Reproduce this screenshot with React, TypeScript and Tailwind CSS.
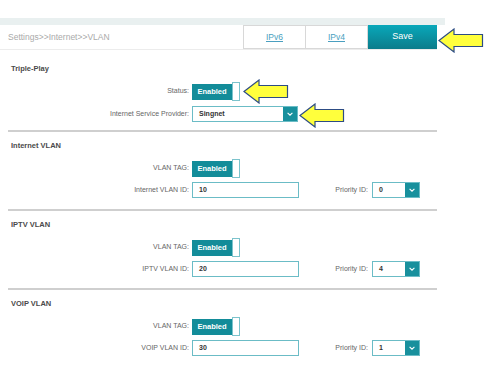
import React from "react";

const font = { fontFamily: '"Liberation Sans", Arial, sans-serif' };

function Arrow({ className }: { className: string }) {
  return (
    <svg className={className} viewBox="0 0 46 25" width="46" height="25">
      <polygon
        points="1,12.5 16,1 16,6.5 44.5,6.5 44.5,18.5 16,18.5 16,24"
        fill="#ffff3c"
        stroke="#2d4c84"
        strokeWidth="1.2"
        strokeLinejoin="miter"
      />
    </svg>
  );
}

function Toggle() {
  return (
    <div className="flex items-center">
      <div className="w-[40px] h-[16px] bg-[#138c99] text-white text-[7.5px] font-bold flex items-center justify-center">
        Enabled
      </div>
      <div className="w-[8px] h-[19px] bg-white border border-[#7cc3cc]" />
    </div>
  );
}

function Chevron() {
  return (
    <svg viewBox="0 0 10 10" width="8" height="8">
      <path d="M2 3.5 L5 6.5 L8 3.5" fill="none" stroke="white" strokeWidth="1.4" />
    </svg>
  );
}

function Select({ value, width }: { value: string; width: string }) {
  return (
    <div className={`${width} h-[16px] flex border border-[#6bbcc6] bg-white`}>
      <div className="flex-1 flex items-center pl-[6px] text-[7px] font-bold text-[#333]">{value}</div>
      <div className="w-[14px] bg-[#18909d] flex items-center justify-center">
        <Chevron />
      </div>
    </div>
  );
}

function Row({ label, children }: { label: string; children: React.ReactNode }) {
  return (
    <div className="flex items-center gap-[3px]">
      <div className="w-[178px] text-right text-[7px] text-[#666]">{label}</div>
      {children}
    </div>
  );
}

function VlanSection({ title, idLabel, id, priority }: { title: string; idLabel: string; id: string; priority: string }) {
  return (
    <section className="border-t-2 border-[#cfcfcf] pl-[3px] pt-[9px] pb-[11px]">
      <h2 className="h-[10px] leading-[10px] text-[7.5px] font-bold text-[#4a4a4a]">{title}</h2>
      <div className="mt-[8px] h-[19px] flex items-center">
        <Row label="VLAN TAG:">
          <Toggle />
        </Row>
      </div>
      <div className="mt-[4px] flex items-center">
        <Row label={idLabel}>
          <div className="w-[107px] h-[16px] border border-[#6bbcc6] bg-white flex items-center pl-[6px] text-[7px] font-bold text-[#333]">
            {id}
          </div>
        </Row>
        <div className="ml-auto mr-[17px] flex items-center gap-[4px]">
          <span className="text-[7px] text-[#666]">Priority ID:</span>
          <Select value={priority} width="w-[48px]" />
        </div>
      </div>
    </section>
  );
}

export default function App() {
  return (
    <div className="relative w-[499px] h-[389px] bg-white overflow-hidden" style={font}>
      <div className="mt-[18px] w-[445px] h-[7px] bg-[#e9f0f0]" />
      <div className="w-[437px] h-[25px] flex border-b border-[#ececec]">
        <div className="flex-1 flex items-center pl-[8px] text-[8.5px] text-[#aaa]">
          Settings&gt;&gt;Internet&gt;&gt;VLAN
        </div>
        <div className="w-[63px] border border-[#d8d8d8] flex items-center justify-center text-[8.5px] text-[#4a9fc0] underline">
          IPv6
        </div>
        <div className="w-[62px] border border-[#d8d8d8] border-l-0 flex items-center justify-center text-[8.5px] text-[#4a9fc0] underline">
          IPv4
        </div>
        <div className="w-[69px] bg-gradient-to-b from-[#08a8ba] to-[#0b7c8b] flex items-center justify-center text-[9px] text-white">
          Save
        </div>
      </div>

      <div className="pl-[8px] w-[437px]">
        <section className="pl-[3px] pt-[14px] pb-[8px]">
          <h2 className="h-[10px] leading-[10px] text-[7.5px] font-bold text-[#4a4a4a]">Triple-Play</h2>
          <div className="mt-[8px] h-[19px] flex items-center">
            <Row label="Status:">
              <Toggle />
            </Row>
          </div>
          <div className="mt-[5px]">
            <Row label="Internet Service Provider:">
              <Select value="Singnet" width="w-[106px]" />
            </Row>
          </div>
        </section>
        <VlanSection title="Internet VLAN" idLabel="Internet VLAN ID:" id="10" priority="0" />
        <VlanSection title="IPTV VLAN" idLabel="IPTV VLAN ID:" id="20" priority="4" />
        <VlanSection title="VOIP VLAN" idLabel="VOIP VLAN ID:" id="30" priority="1" />
      </div>

      <Arrow className="absolute left-[438px] top-[28px]" />
      <Arrow className="absolute left-[243px] top-[79px]" />
      <Arrow className="absolute left-[299px] top-[103px]" />
    </div>
  );
}
